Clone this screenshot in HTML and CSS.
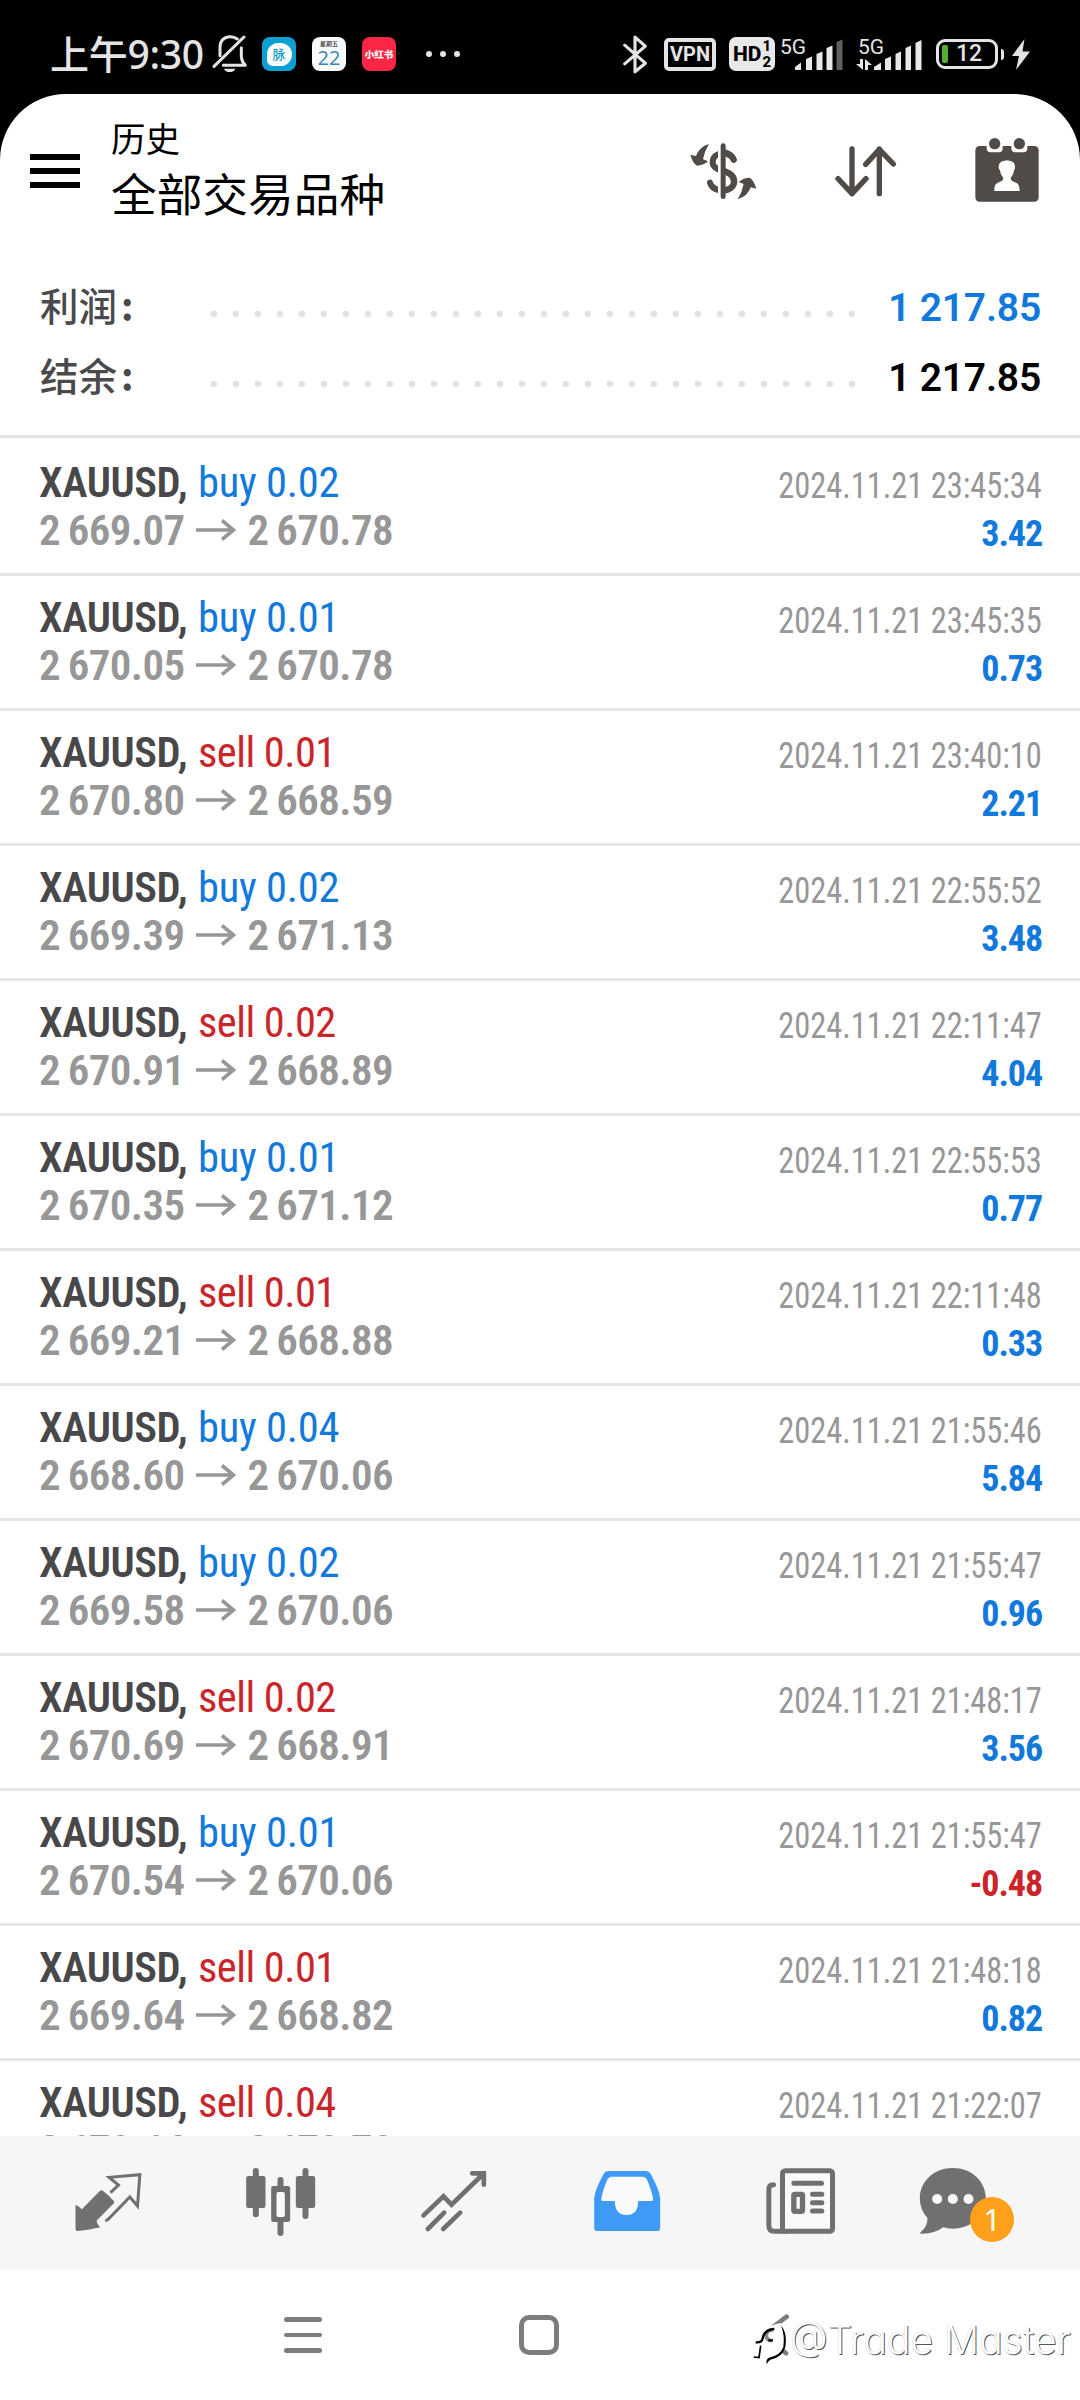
FILE: index.html
```html
<!DOCTYPE html>
<html lang="zh-CN">
<head>
<meta charset="utf-8">
<title>历史</title>
<link rel="stylesheet" href="styles.css">
</head>
<body>
<div class="statusbar">
  <div class="status-left">
    <span class="clock">上午9:30</span>
    <svg class="bell" viewBox="0 0 108 114" width="36" height="38">
      <g fill="none" stroke="#e4e4e4" stroke-width="9" stroke-linecap="round" stroke-linejoin="round">
        <path d="M76 12 Q66 4 52 5 Q24 8 24 38 V62"/>
        <path d="M88 38 V66 Q90 82 100 91 H34"/>
        <path d="M6 94 L96 6"/>
      </g>
      <path d="M36 101 H70 Q66 111 53 111 Q40 111 36 101Z" fill="#e4e4e4"/>
    </svg>
    <span class="app app-mai"><span class="bubble">脉</span></span>
    <span class="app app-cal"><span class="cal-day">星期五</span><span class="cal-num">22</span></span>
    <span class="app app-red">小红书</span>
    <span class="more"><i></i><i></i><i></i></span>
  </div>
  <div class="status-right">
    <svg viewBox="0 0 72 116" width="24" height="39" class="bt"><path d="M5 30 L67 84 L36 110 V6 L67 33 L5 86" fill="none" stroke="#e4e4e4" stroke-width="9.500" stroke-linejoin="round" stroke-linecap="round"/></svg>
    <span class="vpn">VPN</span>
    <span class="hd">HD<span class="hd-n"><b>1</b><b>2</b></span></span>
    <svg class="sig1" viewBox="0 0 63 34" width="63" height="34">
      <text x="-1" y="17" class="g5">5G</text>
      <g fill="#e8e8e8"><path d="M14 33 V30 L20 25.500 V33Z"/><path d="M25 33 V22 L31 19.500 V33Z"/><path d="M35.500 33 V17 L41.500 14.500 V33Z"/><path d="M45.500 33 V11 L51.500 8.500 V33Z"/></g>
      <path d="M55.500 33 V5 L61.500 2.500 V33Z" fill="#606060"/>
    </svg>
    <svg class="sig2" viewBox="0 0 66 34" width="66" height="34">
      <text x="2" y="17" class="g5">5G</text>
      <g fill="#e8e8e8"><path d="M4 22 H7 V33 L0 27 H4Z"/><path d="M9 33 V22 L16 28 H12 V33Z"/><path d="M18 33 V30 L25 25.500 V33Z"/><path d="M29 33 V22 L35 19.500 V33Z"/><path d="M39.500 33 V17 L45 14.500 V33Z"/><path d="M49.500 33 V11 L55 8.500 V33Z"/><path d="M59.500 33 V6 L65.500 3 V33Z"/></g>
    </svg>
    <span class="battery"><i></i>12</span>
    <span class="nub"></span>
    <svg class="bolt" viewBox="0 0 18 31" width="18" height="31"><path d="M12.500 0 L0 17 H7 L4 31 L18 12.500 H10.500Z" fill="#e4e4e4"/></svg>
  </div>
</div>

<div class="screen">
  <header class="appbar">
    <div class="menu"><i></i><i></i><i></i></div>
    <div class="titles">
      <div class="sub">历史</div>
      <div class="main">全部交易品种</div>
    </div>
    <div class="actions">
      <svg viewBox="38 20 206 204" width="68.670" height="68">
        <path d="M172 88 C164 64 110 60 109 95 C109 130 174 115 174 153 C174 188 110 190 101 157" fill="none" stroke="#514b48" stroke-width="18" stroke-linecap="round"/>
        <rect x="125" y="50" width="23" height="150" fill="#fff"/>
        <path d="M148 67 C160 70 168 78 172 88 M145 122 C180 135 182 172 148 179" fill="none" stroke="#514b48" stroke-width="18" stroke-linecap="round"/>
        <rect x="125" y="50" width="9" height="150" fill="#fff"/>
        <rect x="133" y="39" width="15" height="167" rx="7" fill="#514b48"/>
        <path id="ex" d="M42 73 L59 77 Q68 50 98 41 Q84 64 80 87 L95 93 Q80 106 62 106 Q50 100 42 73Z" fill="#514b48"/>
        <use href="#ex" transform="rotate(180 141 124)"/>
      </svg>
      <svg viewBox="478 20 186 204" width="62" height="68"><path d="M529 56 V190 M487 145 L529 190 L571 145 M611 190 V56 M570 102 L611 57 L653 101" fill="none" stroke="#514b48" stroke-width="16" stroke-linecap="round" stroke-linejoin="round"/></svg>
      <svg viewBox="899 20 192 204" width="64" height="68">
        <rect x="900" y="47" width="190" height="167" rx="13" fill="#514b48"/>
        <path d="M934 44 V54 Q934 66 946 66 H970 Q982 66 982 54 V44Z M1008 44 V54 Q1008 66 1020 66 H1044 Q1056 66 1056 54 V44Z" fill="#fff"/>
        <circle cx="958" cy="40" r="17" fill="#514b48"/><circle cx="1032" cy="40" r="17" fill="#514b48"/>
        <path d="M957 182 C957 160 962 160 978 153 Q984 150 984 143 Q974 132 974 120 Q969 116 970 108 Q970 92 995 90 Q1019 92 1019 108 Q1020 116 1016 120 Q1016 132 1006 143 Q1006 150 1012 153 C1028 160 1032 160 1033 182Z" fill="#fff"/>
      </svg>
    </div>
  </header>

  <section class="summary">
    <div class="sumrow"><span class="label">利润<b>:</b></span><span class="dots"></span><span class="sum blue">1 217.85</span></div>
    <div class="sumrow"><span class="label">结余<b>:</b></span><span class="dots"></span><span class="sum">1 217.85</span></div>
  </section>

  <main class="deals" id="deals"></main>

  <nav class="tabs">
    <div class="tab"><svg viewBox="25.500 9 240 240" width="80" height="80">
      <path d="M48 135 Q57 137 67 148 L121 93 Q126 88 131 93 Q150 108 163 123 Q166 127 163 130 L111 182 Q112 192 122 202 Q90 210 54 213 Q48 213 48 207Z" fill="#707070"/>
      <path d="M137 182 Q144 182 150 174 L211 111 L234 138 L241 44 L149 52 L177 75 L153 98" fill="none" stroke="#707070" stroke-width="9"/>
    </svg></div>
    <div class="tab"><svg viewBox="544.500 9 240 240" width="80" height="80">
      <g fill="#707070"><rect x="580" y="24" width="18" height="148" rx="9"/><rect x="560" y="48" width="58" height="96" rx="7"/><rect x="729" y="24" width="18" height="153" rx="9"/><rect x="709" y="48" width="58" height="96" rx="7"/><rect x="654" y="51" width="18" height="177" rx="9"/><rect x="635" y="78" width="57" height="108" rx="7"/></g>
      <rect x="651" y="96" width="25" height="75" rx="5" fill="#f9f9f9"/>
    </svg></div>
    <div class="tab"><svg viewBox="1063.500 9 240 240" width="80" height="80"><path d="M1092 166 L1152 109 L1176 134 L1271 42 M1238 40 H1273 V74 M1105 207 L1154 158 M1151 207 L1202 158" fill="none" stroke="#707070" stroke-width="14" stroke-linecap="round"/></svg></div>
    <div class="tab"><svg viewBox="22.500 9 240 240" width="80" height="80"><path fill-rule="evenodd" fill="#3f9af6" d="M44 115 Q46 90 72 43 Q78 33 88 33 H198 Q208 33 214 43 Q240 90 242 115 V203 Q242 213 232 213 H54 Q44 213 44 203Z"/><path fill="#fafafa" d="M70 123 Q64 123 65 117 Q70 90 84 58 Q88 50 96 50 H190 Q198 50 202 58 Q216 90 221 117 Q222 123 216 123 H176 Q176 165 141 165 Q106 165 106 123Z"/></svg></div>
    <div class="tab"><svg viewBox="541.500 9 240 240" width="80" height="80">
      <path d="M582 74 Q568 74 568 88 V196 Q568 214 584 214 H620" fill="none" stroke="#707070" stroke-width="15" stroke-linecap="round"/>
      <rect x="609" y="32" width="150" height="182" rx="8" fill="#fafafa" stroke="#707070" stroke-width="15"/>
      <rect x="643" y="103" width="26" height="51" rx="3" fill="#fafafa" stroke="#707070" stroke-width="16"/>
      <path d="M643 70 H726 M699 103 H727 M699 128 H727 M699 153 H727" stroke="#707070" stroke-width="15" stroke-linecap="round"/>
    </svg></div>
    <div class="tab"><svg viewBox="1059.500 9 240 240" width="80" height="80">
      <path d="M1119 24 C1175 24 1218 64 1218 115 C1218 166 1175 206 1119 206 Q1104 206 1090 202 Q1065 222 1022 221 Q1019 219 1023 216 Q1043 200 1043 174 Q1020 150 1020 115 C1020 64 1063 24 1119 24Z" fill="#707070"/>
      <g fill="#fafafa"><circle cx="1072" cy="117" r="15"/><circle cx="1119" cy="117" r="15"/><circle cx="1166" cy="117" r="15"/></g>
    </svg><span class="badge">1</span></div>
  </nav>

  <div class="sysnav">
    <div class="recents"><i></i><i></i><i></i></div>
    <div class="home"></div>
    <svg class="back" viewBox="0 0 120 150" width="40" height="50"><path d="M104 20 L36 72 L102 130" fill="none" stroke="#7c7c7c" stroke-width="14" stroke-linecap="round" stroke-linejoin="round"/></svg>
  </div>
</div>

<div class="watermark">
  <svg viewBox="35 40 110 160" width="36.670" height="53.330">
    <path d="M50 125 Q62 88 98 76 L120 70 Q140 95 134 140 Q120 170 84 180 L64 172Z" fill="#fff"/>
    <path d="M98 90 Q76 92 78 110 Q80 124 94 122" fill="none" stroke="#8a8a8a" stroke-width="11"/>
    <path d="M46 128 Q62 130 66 120 Q70 90 102 88 M84 122 H98" fill="none" stroke="#000" stroke-width="7"/>
    <path d="M61 138 L56 174 L40 172" fill="none" stroke="#000" stroke-width="5"/>
    <path d="M122 76 Q142 102 135 142 Q126 174 90 180 Q84 184 79 193 Q76 182 84 175 Q120 168 129 142 Q134 108 122 76Z" fill="#000"/>
  </svg>
  <span>@Trade Master</span>
</div>
<script src="deals.js"></script>
</body>
</html>
```
FILE: styles.css
```css
* { box-sizing: border-box; }
body {
  margin: 0;
  width: 1080px;
  height: 2400px;
  position: relative;
  overflow: hidden;
  background: #000;
  font-family: Roboto, "Noto Sans CJK SC", sans-serif;
}
i, b { font-style: normal; display: block; }

.statusbar { height: 94px; padding: 35px 50px 0 50px; display: flex; justify-content: space-between; color: #e4e4e4; }
.status-left, .status-right { display: flex; height: 38px; align-items: center; }
.status-right svg { overflow: visible; }
.clock { width: 162px; white-space: nowrap; font: 500 39px/38px "Noto Sans", "Noto Sans CJK SC", sans-serif; letter-spacing: -0.300px; }
.app { width: 34px; height: 34px; border-radius: 8px; margin-left: 16px; display: flex; align-items: center; justify-content: center; }
.app-mai { background: #0e9fd3; margin-left: 14px; }
.bubble { width: 25px; height: 23px; border-radius: 12px 12px 12px 6px; background: #fff; color: #1a9ec8; font: 500 13px/22px "Noto Sans CJK SC", sans-serif; text-align: center; }
.app-cal { background: #f7f9fb; flex-direction: column; justify-content: flex-start; }
.cal-day { font: 500 6px/9px "Noto Sans CJK SC", sans-serif; color: #333; margin-top: 2px; }
.cal-num { font: 400 20px/20px "Open Sans", sans-serif; color: #3489b5; }
.app-red { background: #fd2745; color: #fff; font: 900 9.500px/34px "Noto Sans CJK SC", sans-serif; white-space: nowrap; }
.more { display: flex; gap: 8px; margin-left: 30px; }
.more i { width: 6px; height: 6px; border-radius: 50%; background: #e4e4e4; }

.vpn { width: 52px; height: 33px; margin-left: 17px; border: 4px solid #e4e4e4; border-radius: 5px; font: 700 20px/25px Roboto, sans-serif; text-align: center; }
.hd { width: 46px; height: 34px; margin-left: 13px; border-radius: 7px; background: #e8e8e8; color: #000; display: flex; align-items: center; justify-content: center; font: 800 21px/34px Roboto, sans-serif; }
.hd-n { font-size: 15px; line-height: 16px; margin-left: 1px; }
.hd-n b { font-weight: 800; }
.g5 { font: 400 21px Roboto, sans-serif; fill: #e4e4e4; }
.sig1 { margin-left: 6px; }
.sig2 { margin-left: 12px; }
.battery { width: 62px; height: 30px; margin-left: 14px; border: 3px solid #e4e4e4; border-radius: 9px; font: 500 23px/24px Roboto, sans-serif; display: flex; align-items: center; gap: 8px; padding-left: 3px; }
.battery i { width: 6px; height: 18px; border-radius: 2px; background: #58ad2e; }
.nub { width: 3px; height: 11px; margin-left: 3px; border-radius: 0 3px 3px 0; background: #e4e4e4; }
.bolt { margin-left: 8px; }

.screen { height: 2306px; background: #fff; border-radius: 66px 66px 0 0; display: flex; flex-direction: column; overflow: hidden; }

.appbar { height: 171px; padding: 0 41px 0 30px; display: flex; align-items: flex-start; }
.menu { width: 50px; margin-top: 60px; display: flex; flex-direction: column; gap: 8px; }
.menu i { height: 6px; background: #000; }
.titles { flex: 1; margin-left: 31px; padding-top: 18px; color: #000; font-family: "Noto Sans CJK SC", sans-serif; font-weight: 400; }
.sub { font-size: 34.500px; line-height: 50px; }
.main { font-size: 45.700px; line-height: 61px; }
.actions { display: flex; margin-top: 43px; }
.actions svg:nth-child(2) { margin-left: 77px; }
.actions svg:nth-child(3) { margin-left: 78px; }

.summary { height: 173px; padding: 6px 39px 0 40px; border-bottom: 3px solid #e4e4e4; }
.sumrow { height: 70px; display: flex; align-items: center; }
.label { width: 166px; margin-top: -4px; display: flex; color: #4a4a4c; font: 500 38.500px/70px "Noto Sans CJK SC", sans-serif; }
.label b { margin-left: 4px; font-weight: 600; }
.dots { width: 660px; height: 8px; margin-top: 16px; background: radial-gradient(circle at 7.800px 4px, #e2e2e2 2.900px, transparent 3.700px) 0 0 / 22px 8px; }
.sum { flex: 1; margin-top: 3px; text-align: right; font: 600 39px/70px Roboto, sans-serif; letter-spacing: -0.200px; color: #000; white-space: pre; }
.sum.blue, .blue { color: #1279dc; }
.red { color: #c9252b; }

.deals { flex: 1; min-height: 0; overflow: hidden; font-family: "Roboto Condensed", sans-serif; }
.deal { height: 135px; padding: 18px 38px 0 39px; border-top: 3px solid #e6e6e6; }
.deal:first-child { border-top-color: transparent; }
.line { height: 48px; line-height: 48px; display: flex; align-items: baseline; justify-content: space-between; white-space: pre; }
.what { display: flex; align-items: baseline; font-size: 42.500px; }
.sym { width: 159px; font-weight: 650; color: #48484a; letter-spacing: -0.400px; }
.side { letter-spacing: -0.250px; }
.side.red { letter-spacing: -0.550px; }
.prices { display: flex; align-items: center; gap: 11.500px; font-size: 43px; font-weight: 650; color: #979797; letter-spacing: -0.600px; word-spacing: -1.600px; transform: translateY(-1px); }
.date { font-size: 36px; color: #979797; transform: translateY(1px) scaleX(.9); transform-origin: right; }
.profit { font-size: 36px; font-weight: 700; letter-spacing: -1.100px; }

.tabs { height: 134px; padding: 0 21px; background: #f6f6f6; display: grid; grid-template-columns: repeat(6, 173px); }
.tab { position: relative; display: flex; align-items: center; justify-content: center; }
.tab svg { overflow: visible; }
.badge { position: absolute; left: 84px; top: 61px; width: 44px; height: 45px; border-radius: 50%; background: #ff9f1a; color: #fff; font: 400 31px/45px "Noto Sans", sans-serif; text-align: center; }

.sysnav { height: 130px; padding-left: 284px; display: flex; }
.recents { width: 38px; padding-top: 47px; display: flex; flex-direction: column; gap: 11px; }
.recents i { height: 4.600px; border-radius: 3px; background: #7c7c7c; }
.home { width: 40px; height: 40px; margin: 45px 0 0 197px; border: 5px solid #7c7c7c; border-radius: 10px; }
.back { margin: 40px 0 0 193px; }

.watermark { position: absolute; left: 752px; top: 2313px; display: flex; align-items: flex-start; color: #fff; }
.watermark span { margin: 2px 0 0 1px; white-space: nowrap; font: 300 39px/50px Inter, sans-serif; font-feature-settings: "cv11"; text-shadow: 1px 1px 0 #555, 0 0 1px #bbb; }
```
FILE: deals.js
```js
const deals = [
  ['buy', '0.02', '2 669.07', '2 670.78', '23:45:34', '3.42'],
  ['buy', '0.01', '2 670.05', '2 670.78', '23:45:35', '0.73'],
  ['sell', '0.01', '2 670.80', '2 668.59', '23:40:10', '2.21'],
  ['buy', '0.02', '2 669.39', '2 671.13', '22:55:52', '3.48'],
  ['sell', '0.02', '2 670.91', '2 668.89', '22:11:47', '4.04'],
  ['buy', '0.01', '2 670.35', '2 671.12', '22:55:53', '0.77'],
  ['sell', '0.01', '2 669.21', '2 668.88', '22:11:48', '0.33'],
  ['buy', '0.04', '2 668.60', '2 670.06', '21:55:46', '5.84'],
  ['buy', '0.02', '2 669.58', '2 670.06', '21:55:47', '0.96'],
  ['sell', '0.02', '2 670.69', '2 668.91', '21:48:17', '3.56'],
  ['buy', '0.01', '2 670.54', '2 670.06', '21:55:47', '-0.48'],
  ['sell', '0.01', '2 669.64', '2 668.82', '21:48:18', '0.82'],
  ['sell', '0.04', '2 670.64', '2 670.70', '21:22:07', ''],
];
const arrow = '<svg width="40" height="24" viewBox="0 0 40 24"><path d="M0 12H37M26 2.500L37.500 12L26 21.500" fill="none" stroke="#979797" stroke-width="3.600"/></svg>';
document.getElementById('deals').innerHTML = deals.map(([side, lot, open, close, time, profit]) => `
  <div class="deal">
    <div class="line"><span class="what"><span class="sym">XAUUSD,</span><span class="side ${side === 'buy' ? 'blue' : 'red'}">${side} ${lot}</span></span><span class="date">2024.11.21 ${time}</span></div>
    <div class="line"><span class="prices"><span>${open}</span>${arrow}<span>${close}</span></span><span class="profit ${profit < 0 ? 'red' : 'blue'}">${profit}</span></div>
  </div>`).join('');
```
